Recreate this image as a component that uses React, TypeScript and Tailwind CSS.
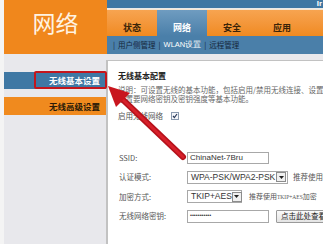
import React from 'react';

const tabs = [
  { label: '状态', active: false },
  { label: '网络', active: true },
  { label: '安全', active: false },
  { label: '应用', active: false },
];

function DropBtn() {
  return (
    <span className="ml-auto mr-[1px] flex h-[10px] w-[10px] shrink-0 items-center justify-center border border-[#8c8c8c] bg-[#f0f0f0]">
      <svg width="5" height="3" viewBox="0 0 5 3">
        <path d="M0 0h5L2.5 3z" fill="#222" />
      </svg>
    </span>
  );
}

function Row({ label, children }: { label: string; children: React.ReactNode }) {
  return (
    <div className="flex h-[13px] items-center">
      <span className="w-[69px] shrink-0 pl-[1px] text-[7.5px] text-[#555]">{label}</span>
      {children}
    </div>
  );
}

export default function App() {
  return (
    <div className="relative h-[244px] w-[323px] overflow-hidden bg-white font-['Noto_Sans_CJK_SC','Liberation_Sans',sans-serif]">
      {/* header */}
      <div className="flex h-[54px]">
        <div className="w-[4px] shrink-0 bg-[#f4f4f4]" />
        <div className="flex w-[103px] shrink-0 items-center justify-center bg-[#f0871c] pb-[10px] text-[23px] leading-none text-[#fff3e2]">
          网络
        </div>
        <div className="flex min-w-0 flex-1 flex-col">
          <div className="flex h-[8px] items-center justify-end overflow-hidden bg-[#3e77a3] pr-[1px] font-['Liberation_Sans'] text-[8px] font-bold leading-none text-white">
            Ir
          </div>
          <div className="h-[2px] bg-gradient-to-b from-[#e3ecf3] to-[#fbe3c6]" />
          <div className="flex h-[26px] bg-gradient-to-b from-[#f7a450] to-[#f08a1e]">
            {tabs.map(t => (
              <div
                key={t.label}
                className={
                  t.active
                    ? 'flex w-[50px] shrink-0 justify-center bg-gradient-to-b from-[#6f9cc0] to-[#4a7fa9] pt-[12px] text-[9px] font-bold leading-[12px] text-white'
                    : 'flex w-[50px] shrink-0 justify-center pt-[12px] text-[9px] font-bold leading-[12px] text-[#3a2408]'
                }
              >
                {t.label}
              </div>
            ))}
          </div>
          <div className="flex h-[18px] items-center gap-[3px] whitespace-nowrap bg-[#4a7fa9] pl-[6px] text-[7.5px] leading-none text-[#14263a]">
            <span>|</span>
            <span>用户侧管理</span>
            <span>|</span>
            <span className="font-['Liberation_Sans'] text-white">WLAN设置</span>
            <span>|</span>
            <span>远程管理</span>
          </div>
        </div>
      </div>

      {/* body */}
      <div className="flex h-[190px] bg-[#e8e8ec]">
        <div className="w-[4px] shrink-0 bg-[#f4f4f4]" />
        <div className="flex w-[102px] shrink-0 flex-col pt-[18px]">
          <div className="flex h-[17px] items-center justify-end bg-[#3f78a4] pr-[6px] text-[8.5px] font-bold text-white">
            无线基本设置
          </div>
          <div className="mt-[8px] flex h-[18px] items-center justify-end bg-[#f08a1e] pr-[6px] text-[8.5px] font-bold text-[#2a1a08]">
            无线高级设置
          </div>
        </div>
        <div className="mt-[6px] min-w-0 flex-1 overflow-hidden border-l-2 border-t border-[#c2c2c2] bg-white pl-[10px] pt-[9px]">
          <div className="text-[8px] font-bold leading-[11px] text-[#222]">无线基本配置</div>
          <div className="mt-[4px] whitespace-nowrap text-[7.5px] leading-[9px] text-[#666]">
            <div>说明：可设置无线的基本功能，包括启用/禁用无线连接、设置SSID</div>
            <div>设置要网络密钥及密钥强度等基本功能。</div>
          </div>
          <div className="mt-[8px] flex h-[10px] items-center whitespace-nowrap text-[7.5px] text-[#555]">
            <span>启用无线网络</span>
            <span className="ml-[8px] flex h-[8px] w-[8px] shrink-0 items-center justify-center border border-[#8a9ab0] bg-[#f4f6fa]">
              <svg width="6" height="6" viewBox="0 0 6 6">
                <path d="M1 3l1.4 1.6L5 1" fill="none" stroke="#2a3a5a" strokeWidth="1.2" />
              </svg>
            </span>
          </div>

          <div className="mt-[30px] flex flex-col gap-[6.5px]">
            <Row label="SSID:">
              <div className="flex h-[12px] w-[82px] shrink-0 items-center border border-[#a8a8a8] pl-[2px] font-['Liberation_Sans'] text-[8px] text-[#333]">
                ChinaNet-7Bru
              </div>
            </Row>
            <Row label="认证模式:">
              <div className="flex h-[13px] w-[101px] shrink-0 items-center whitespace-nowrap border border-[#a8a8a8] pl-[3px] font-['Liberation_Sans'] text-[8.5px] text-[#333]">
                WPA-PSK/WPA2-PSK
                <DropBtn />
              </div>
              <span className="ml-[5px] whitespace-nowrap text-[7.5px] text-[#555]">推荐使用WPA2-PSK</span>
            </Row>
            <Row label="加密方式:">
              <div className="flex h-[13px] w-[55px] shrink-0 items-center whitespace-nowrap border border-[#a8a8a8] pl-[3px] font-['Liberation_Sans'] text-[8.5px] text-[#333]">
                TKIP+AES
                <DropBtn />
              </div>
              <span className="ml-[7px] whitespace-nowrap text-[7px] text-[#555]">
                推荐使用<span className="font-['Liberation_Serif'] text-[5.5px]">TKIP+AES</span>加密
              </span>
            </Row>
            <Row label="无线网络密钥:">
              <div className="flex h-[13px] w-[82px] shrink-0 items-center border border-[#a8a8a8] pl-[2px] font-['Liberation_Sans'] text-[5.5px] leading-none text-[#333]">
                •••••••••••
              </div>
              <div className="ml-[7px] flex h-[13px] items-center whitespace-nowrap rounded-[1px] border border-[#9a9a9a] bg-gradient-to-b from-[#fafafa] to-[#e4e4e4] px-[4px] text-[7.5px] text-[#222]">
                点击此处查看
              </div>
            </Row>
          </div>
        </div>
      </div>

      {/* annotation: red box */}
      <div className="pointer-events-none absolute left-[34px] top-[71px] h-[18px] w-[73px] rounded-[2px] border-[2.5px] border-[#c4161c]" />

      {/* annotation: red arrow */}
      <svg className="pointer-events-none absolute left-0 top-0" width="323" height="244" viewBox="0 0 323 244">
        <line x1="183" y1="157" x2="120" y2="97" stroke="#b5121b" strokeWidth="6" strokeLinecap="round" />
        <line x1="183" y1="157" x2="120" y2="97" stroke="#d8202a" strokeWidth="3" strokeLinecap="round" />
        <polygon points="108,86 130,93 116,107" fill="#c8161f" />
      </svg>
    </div>
  );
}
